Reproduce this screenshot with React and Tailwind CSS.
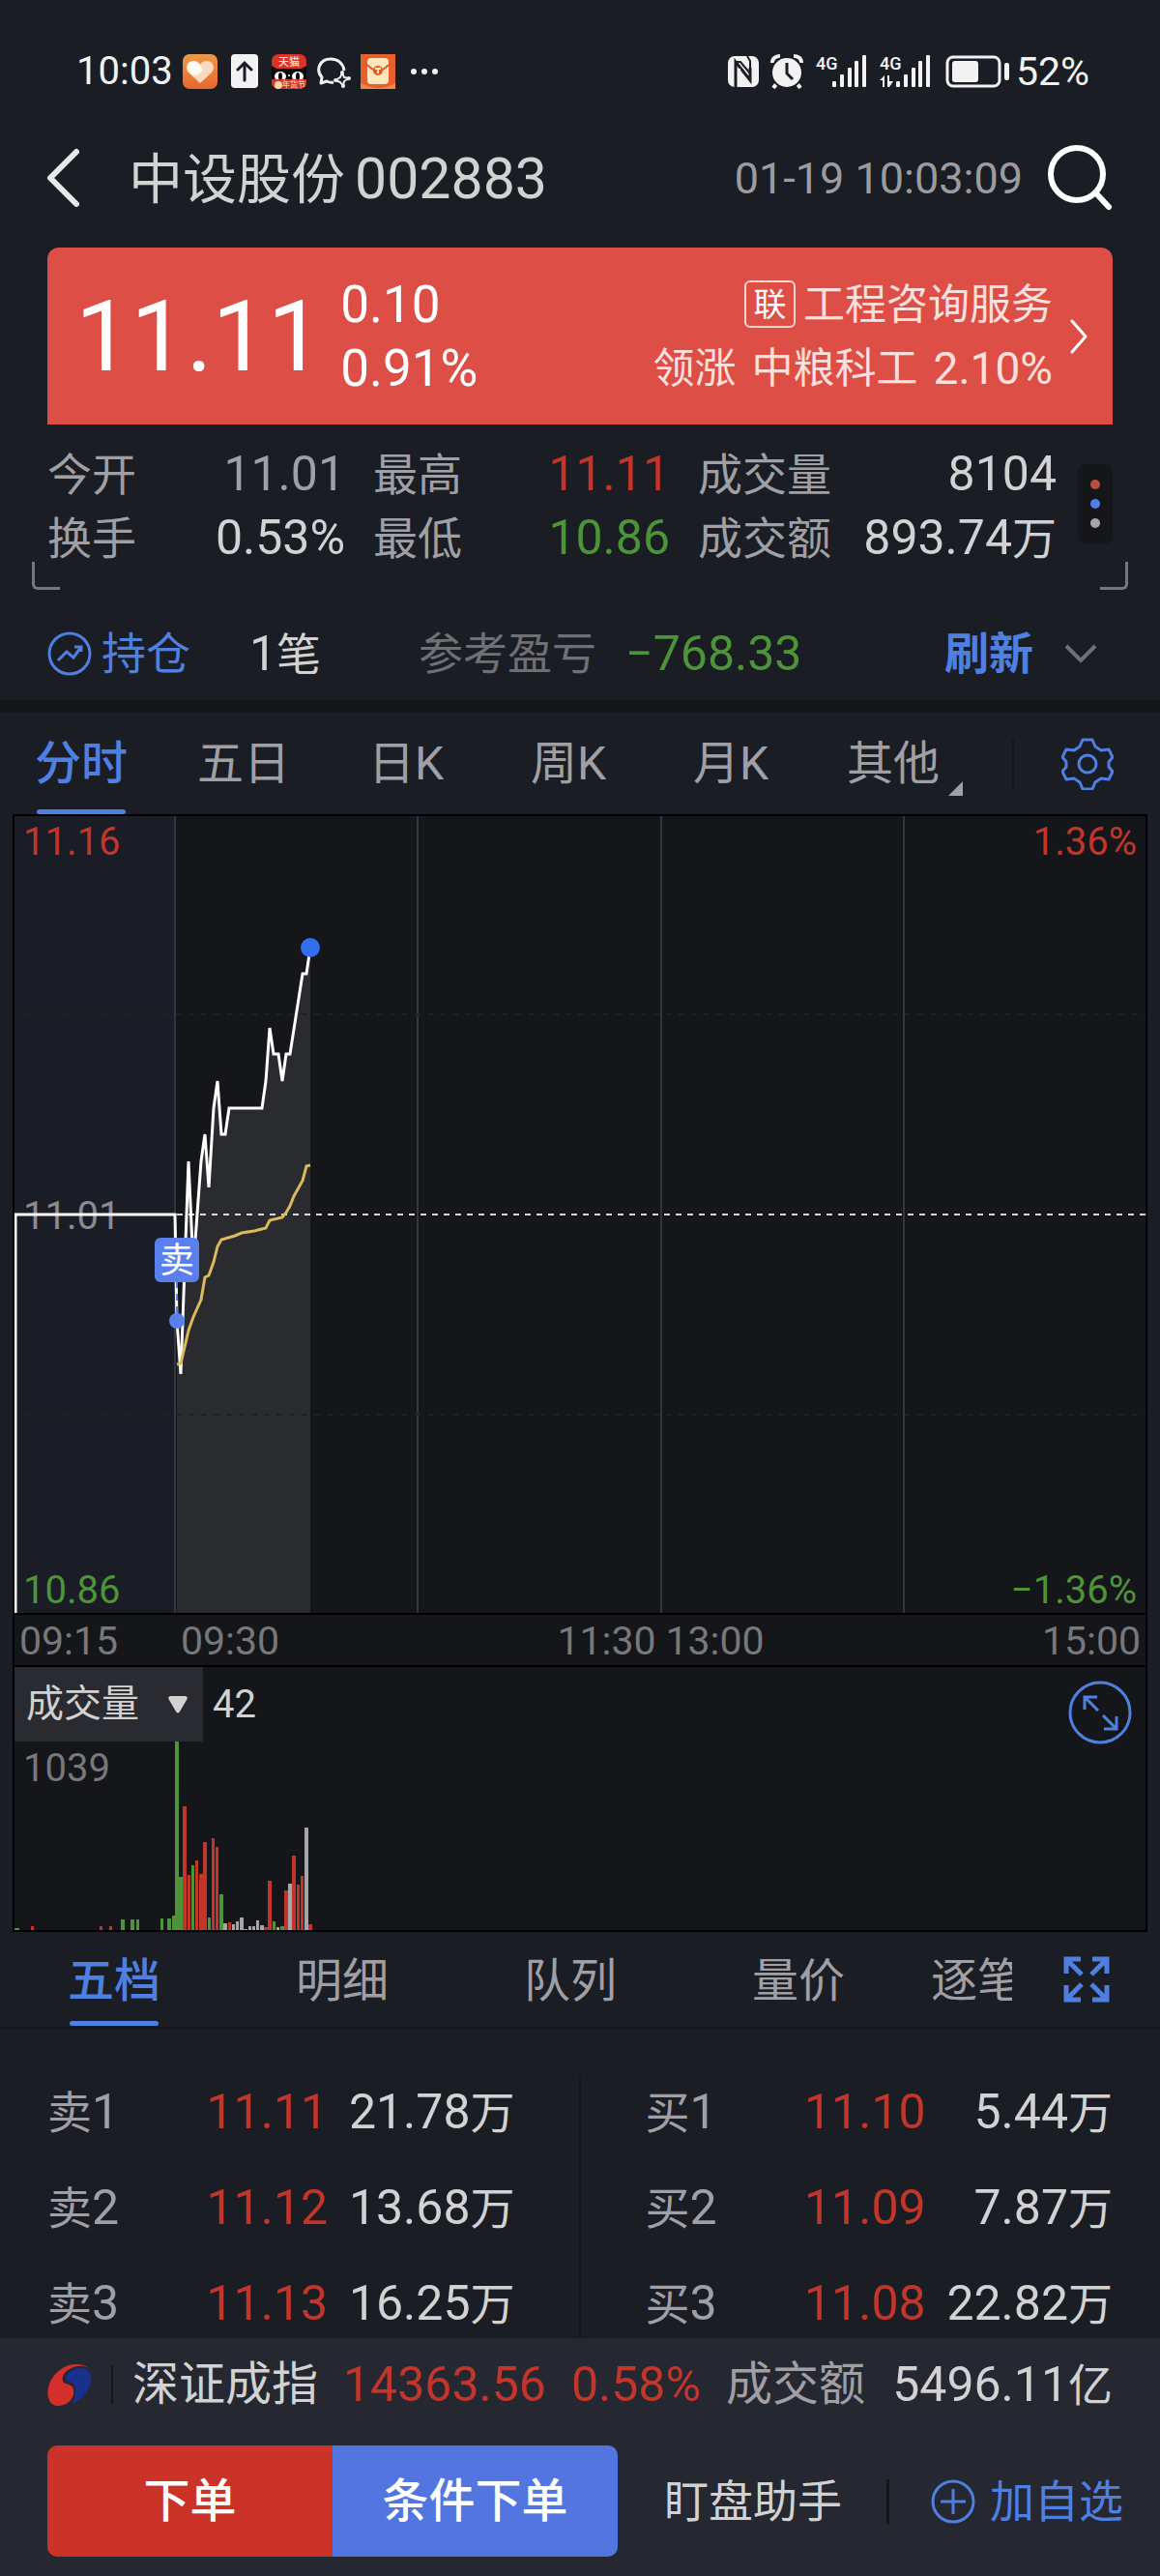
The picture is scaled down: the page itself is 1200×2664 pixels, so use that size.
const PRICE_POINTS =
  '3,826 3,413 168,413 170,523 174,578 182,358 187,467 195,358 199,330 203,385 208,303 212,275 216,330 220,330 224,303 258,303 262,275 266,220 270,247 275,247 279,275 283,247 287,247 300,164 304,164 308,137'

const AREA_POINTS =
  '170,826 170,523 174,578 182,358 187,467 195,358 199,330 203,385 208,303 212,275 216,330 220,330 224,303 258,303 262,275 266,220 270,247 275,247 279,275 283,247 287,247 300,164 304,164 308,137 308,826'

const AVERAGE_POINTS =
  '170,568 174,567 182,533 187,519 195,501 199,478 203,476 208,462 212,446 216,439 230,435 237,432 250,430 262,427 266,419 279,416 283,411 287,404 291,394 300,378 304,363 308,362'

const RED = '#c1352b'
const GREEN = '#4c9437'
const GREY = '#a6a6aa'

// x, height, colour, width
const VOLUME_BARS = [
  [2, 2, GREEN, 5], [19, 4, RED, 3], [90, 4, RED, 3], [100, 4, RED, 3],
  [112, 11, GREEN, 4], [122, 11, GREEN, 4], [128, 11, GREEN, 3], [153, 12, GREEN, 3],
  [160, 12, GREEN, 4], [165, 15, GREEN, 4], [168, 195, GREEN, 4], [172, 55, GREEN, 4],
  [176, 128, RED, 4], [181, 57, RED, 3], [185, 67, GREEN, 3], [189, 72, RED, 3],
  [193, 58, RED, 4], [197, 91, RED, 4], [202, 13, GREEN, 3], [206, 95, RED, 3],
  [210, 86, RED, 3], [214, 37, GREEN, 4], [218, 7, GREY, 4], [223, 8, RED, 3],
  [227, 6, GREY, 3], [231, 9, GREY, 3], [235, 13, GREY, 4], [239, 1, GREY, 4],
  [244, 4, GREY, 3], [248, 4, GREY, 3], [252, 10, GREY, 3], [256, 5, GREY, 4],
  [260, 3, RED, 4], [264, 51, RED, 4], [269, 9, GREEN, 3], [273, 3, GREY, 3],
  [277, 4, GREEN, 4], [281, 41, RED, 4], [285, 48, GREY, 4], [289, 77, RED, 4],
  [294, 47, RED, 3], [298, 56, RED, 3], [302, 106, GREY, 4], [306, 6, RED, 4],
]

const SELL_ROWS = [
  ['卖1', '11.11', '21.78万'],
  ['卖2', '11.12', '13.68万'],
  ['卖3', '11.13', '16.25万'],
]

const BUY_ROWS = [
  ['买1', '11.10', '5.44万'],
  ['买2', '11.09', '7.87万'],
  ['买3', '11.08', '22.82万'],
]

const STATS = [
  ['今开', '11.01', 'text-[#a0a0a4]'],
  ['最高', '11.11', 'text-[#c1352b]'],
  ['成交量', '8104', 'text-[#d2d2d2]'],
  ['换手', '0.53%', 'text-[#d2d2d2]'],
  ['最低', '10.86', 'text-[#4c9437]'],
  ['成交额', '893.74万', 'text-[#d2d2d2]'],
]

// Mixes 50px figures with slightly smaller Chinese units such as 万 and 亿.
function Figure({ value }) {
  const unit = value.match(/[万亿]$/)
  if (!unit) return <span className="text-[50px]">{value}</span>
  return (
    <>
      <span className="text-[50px]">{value.slice(0, -1)}</span>
      <span className="text-[46px]">{unit[0]}</span>
    </>
  )
}

function SignalIcon({ data }) {
  return (
    <svg className="h-[34px] w-[54px] overflow-visible" viewBox="0 0 54 34" fill="#f2f2f2" aria-hidden="true">
      <text x="0" y="15" fontSize="18" fontWeight="500" fontFamily="Roboto, sans-serif">4G</text>
      {data && <path d="M5 21v12H3v-7H0zM8 21h2v6h4l-4 6H8z" />}
      <rect x="17" y="27" width="4" height="6" rx="1" />
      <rect x="25" y="20" width="4" height="13" rx="1" />
      <rect x="33" y="13" width="4" height="20" rx="1" />
      <rect x="40" y="6" width="4" height="27" rx="1" />
      <rect x="48" y="0" width="4" height="33" rx="1" />
    </svg>
  )
}

function StatusBar() {
  return (
    <div className="flex h-[146px] items-center justify-between pt-[2px] pr-[73px] pl-[79px] text-[#f2f2f2]">
      <div className="flex items-center">
        <span className="text-[40px] leading-none">10:03</span>
        <svg className="ml-[10px] size-9" viewBox="0 0 36 36" aria-hidden="true">
          <defs>
            <linearGradient id="heartBg" x2="0" y2="1">
              <stop offset="0" stopColor="#eb9a4b" />
              <stop offset="1" stopColor="#e6672e" />
            </linearGradient>
          </defs>
          <rect width="36" height="36" rx="7" fill="url(#heartBg)" />
          <path d="M18 30L6 19C1 13 6 6 12 7c3 0 5 2 6 4 1-2 3-4 6-4 6-1 11 6 6 12z" fill="#fbd9bd" />
          <path d="M18 11c-4-5-10-5-13 0-1 5 2 8 6 12l5-2 5-4z" fill="#fffaf4" />
        </svg>
        <svg className="ml-[14px] h-9 w-7" viewBox="0 0 28 36" aria-hidden="true">
          <rect width="28" height="35" rx="4" fill="#f2f2f2" />
          <path d="M14 27V10M7 16l7-7 7 7" fill="none" stroke="#1a1d25" strokeWidth="3" strokeLinecap="round" />
        </svg>
        <svg className="ml-[14px] size-9" viewBox="0 0 36 36" aria-hidden="true">
          <rect width="36" height="36" rx="7" fill="#db3327" />
          <path d="M0 12l5 3h26l5-3v14H0z" fill="#090909" />
          <text x="18" y="12" fontSize="11" fill="#fff" textAnchor="middle" fontFamily="Noto Sans CJK SC, sans-serif">天猫</text>
          <ellipse cx="9" cy="23" rx="6" ry="5" fill="#fff" />
          <ellipse cx="27" cy="23" rx="6" ry="5" fill="#fff" />
          <ellipse cx="9" cy="23" rx="2" ry="4" fill="#090909" />
          <ellipse cx="27" cy="23" rx="2" ry="4" fill="#090909" />
          <circle cx="18" cy="22" r="1" fill="#fff" />
          <path d="M0 26h36v3a7 7 0 0 1-7 7H7a7 7 0 0 1-7-7z" fill="#db3327" />
          <circle cx="7" cy="32" r="4" fill="#f9d9a4" />
          <text x="23" y="34" fontSize="8" fill="#ffe9cf" textAnchor="middle" fontFamily="Noto Sans CJK SC, sans-serif">年货节</text>
        </svg>
        <svg className="ml-[10px] size-9" viewBox="0 0 36 36" fill="none" stroke="#f2f2f2" strokeWidth="3" aria-hidden="true">
          <path d="M18 29c-3 1-5 0-7-1l-6 2 1-6C-1 16 4 5 15 5c8 0 13 5 14 12" strokeLinejoin="round" />
          <path d="M27 19l2 5 5 1-5 3-1 5-3-4-5-2 5-3z" strokeWidth="2" strokeLinejoin="round" />
          <g fill="#f2f2f2" stroke="none">
            <circle cx="27" cy="19" r="2" />
            <circle cx="34" cy="25" r="2" />
            <circle cx="28" cy="33" r="2" />
            <circle cx="20" cy="27" r="2" />
          </g>
        </svg>
        <svg className="ml-[10px] size-9" viewBox="0 0 36 36" aria-hidden="true">
          <rect width="36" height="36" fill="#e6602e" />
          <path d="M0 30q18 10 36 0v6H0z" fill="#f08a3c" />
          <rect x="7" y="4" width="22" height="27" rx="4" fill="#ffe6bd" />
          <path d="M7 11q11 12 22 0" fill="none" stroke="#e6602e" strokeWidth="2" />
          <circle cx="18" cy="17" r="5" fill="#dd5a2b" />
          <path d="M15 15h6M18 15v5" stroke="#ffe6bd" strokeWidth="2" />
        </svg>
        <svg className="ml-4 h-2 w-7" viewBox="0 0 28 8" fill="#f2f2f2" aria-hidden="true">
          <circle cx="3" cy="4" r="3" />
          <circle cx="14" cy="4" r="3" />
          <circle cx="25" cy="4" r="3" />
        </svg>
      </div>
      <div className="flex items-center">
        <svg className="size-8" viewBox="0 0 32 32" aria-hidden="true">
          <rect width="32" height="32" rx="7" fill="#f2f2f2" />
          <path d="M8 32V6l15 19V12" fill="none" stroke="#1a1d25" strokeWidth="3" />
          <path d="M8 6l5 0 10 12M23 25V5l-3-5" fill="none" stroke="#1a1d25" strokeWidth="2" />
          <path d="M12 13v13" stroke="#f2f2f2" strokeWidth="2" />
        </svg>
        <svg className="ml-3 h-9 w-[34px]" viewBox="0 0 34 36" aria-hidden="true">
          <path d="M6 31l-3 4M28 31l3 4" stroke="#f2f2f2" strokeWidth="4" />
          <path d="M2 9c0-5 4-7 8-7M32 9c0-5-4-7-8-7" fill="none" stroke="#f2f2f2" strokeWidth="4" />
          <circle cx="17" cy="19" r="16" fill="#f2f2f2" stroke="#1a1d25" strokeWidth="2" />
          <path d="M17 9v11l6 6" fill="none" stroke="#1a1d25" strokeWidth="3" />
        </svg>
        <div className="ml-[13px] flex gap-3">
          <SignalIcon />
          <SignalIcon data />
        </div>
        <svg className="ml-[14px] h-[34px] w-[67px]" viewBox="0 0 67 34" aria-hidden="true">
          <rect x="2" y="2" width="54" height="30" rx="6" fill="none" stroke="#f2f2f2" strokeWidth="3" />
          <rect x="7" y="6" width="27" height="22" rx="3" fill="#f2f2f2" />
          <rect x="61" y="8" width="5" height="18" rx="2" fill="#f2f2f2" />
        </svg>
        <span className="ml-[6px] text-[41px] leading-none">52%</span>
      </div>
    </div>
  )
}

function Header() {
  return (
    <header className="flex h-[76px] items-center px-[47px]">
      <button aria-label="返回">
        <svg className="h-[62px] w-9" viewBox="0 0 36 62" fill="none" stroke="#e8e8e8" strokeWidth="6" strokeLinecap="round" strokeLinejoin="round">
          <path d="M32 4L5 31l27 27" />
        </svg>
      </button>
      <h1 className="ml-[50px] flex items-baseline gap-[10px] leading-none whitespace-nowrap text-[#d2d2d2]">
        <span className="text-[56px]">中设股份</span>
        <span className="text-[59px]">002883</span>
      </h1>
      <time className="ml-auto text-[45px] leading-none whitespace-nowrap text-[#9c9ca0]">01-19 10:03:09</time>
      <button className="ml-[25px]" aria-label="搜索">
        <svg className="h-[68px] w-[70px]" viewBox="0 0 70 68" fill="none" stroke="#fff" strokeWidth="6" strokeLinecap="round">
          <circle cx="31" cy="30" r="27" />
          <path d="M51 50l13 14" />
        </svg>
      </button>
    </header>
  )
}

function QuoteCard() {
  return (
    <section className="mx-[49px] mt-[34px] flex h-[183px] items-center rounded-t-xl bg-[#dc4e46] pr-[26px] pl-[29px] text-white">
      <span className="text-[102px] leading-none">11.11</span>
      <div className="ml-[18px] flex flex-col text-[53px] leading-[66px]">
        <span>0.10</span>
        <span>0.91%</span>
      </div>
      <a href="#sector" className="ml-auto flex items-center gap-[18px] text-[#fde0de]">
        <span className="flex flex-col items-end text-[43px] leading-[66px]">
          <span className="flex items-center gap-2">
            <span className="flex h-[49px] w-[53px] items-center justify-center rounded-md border-2 border-[#fbd5d2] text-[34px] leading-none text-white">
              联
            </span>
            工程咨询服务
          </span>
          <span className="flex gap-4">
            <span>领涨</span>
            <span>中粮科工</span>
            <span className="text-[46px]">2.10%</span>
          </span>
        </span>
        <svg className="h-9 w-[18px]" viewBox="0 0 18 36" fill="none" stroke="#fff" strokeWidth="3" strokeLinecap="round" strokeLinejoin="round">
          <path d="M2 2l14 16L2 34" />
        </svg>
      </a>
    </section>
  )
}

function Stats() {
  return (
    <section className="relative flex h-[171px] gap-[22px] px-[49px] pt-[18px]">
      <dl className="grid flex-1 grid-cols-[308fr_307fr_371fr] content-start gap-x-[29px]">
        {STATS.map(([label, value, color]) => (
          <div key={label} className="flex h-[66px] items-baseline justify-between leading-[66px] whitespace-nowrap">
            <dt className="text-[46px] text-[#a0a0a4]">{label}</dt>
            <dd className={color}>
              <Figure value={value} />
            </dd>
          </div>
        ))}
      </dl>
      <button aria-label="更多指标" className="mt-[23px] flex h-[82px] w-9 flex-col items-center justify-center gap-[10px] rounded-lg bg-[#15161a]">
        <span className="size-[10px] rounded-full bg-[#b84f3d]" />
        <span className="size-[10px] rounded-full bg-[#4f7fe8]" />
        <span className="size-[10px] rounded-full bg-[#a6a6aa]" />
      </button>
      <span className="absolute bottom-0 left-[33px] size-[29px] rounded-bl-md border-b-[3px] border-l-[3px] border-[#77787c]" />
      <span className="absolute right-[33px] bottom-0 size-[29px] rounded-br-md border-r-[3px] border-b-[3px] border-[#77787c]" />
    </section>
  )
}

function Position() {
  return (
    <section className="flex h-[114px] items-center pt-[18px] pr-[64px] pl-[49px] text-[46px] leading-none whitespace-nowrap">
      <a href="#position" className="flex items-center gap-[10px] text-[#4f80e1]">
        <svg className="size-[46px]" viewBox="0 0 46 46" fill="none" stroke="currentColor" strokeWidth="3">
          <circle cx="23" cy="23" r="21" />
          <path d="M11 30l9-9 7 6 8-11M28 16h7v5" />
        </svg>
        持仓
      </a>
      <span className="ml-[61px] text-[#d2d2d2]">
        <span className="text-[50px]">1</span>笔
      </span>
      <span className="ml-[101px] text-[#6f7074]">参考盈亏</span>
      <span className="ml-[30px] text-[50px] text-[#4c9437]">−768.33</span>
      <button className="ml-auto font-bold text-[#4f80e1]">刷新</button>
      <button className="ml-[31px]" aria-label="展开">
        <svg className="h-5 w-9" viewBox="0 0 36 20" fill="none" stroke="#6f7074" strokeWidth="4">
          <path d="M3 2l15 15L33 2" />
        </svg>
      </button>
    </section>
  )
}

function PeriodTabs() {
  return (
    <nav className="flex h-[105px] items-stretch pr-[48px] text-[48px] leading-[106px] text-[#a0a0a4]">
      <div className="grid flex-1 grid-cols-6 items-start">
        <button className="flex flex-col items-center font-medium text-[#4f80e1]">
          <span className="h-[100px]">分时</span>
          <span className="h-[5px] w-[92px] rounded-sm bg-[#4f80e1]" />
        </button>
        <button>五日</button>
        <button>日K</button>
        <button>周K</button>
        <button>月K</button>
        <button className="relative">
          其他
          <svg className="absolute right-3 bottom-5 size-[15px]" viewBox="0 0 15 15" fill="#a0a0a4">
            <path d="M15 0v15H0z" />
          </svg>
        </button>
      </div>
      <span className="ml-[39px] h-[49px] w-[2px] self-center bg-[#121317]" />
      <button className="ml-[49px]" aria-label="设置">
        <svg className="size-[54px]" viewBox="0 0 54 54" fill="none" stroke="#4f80e1" strokeWidth="3" strokeLinejoin="round">
          <path d="M22 2h10l3 7 6 4 8-1 4 8-4 5v5l4 5-4 8-8-1-6 4-3 7H22l-3-7-6-4-8 1-4-8 4-5v-5l-4-5 4-8 8 1 6-4z" />
          <circle cx="27" cy="27" r="9" />
        </svg>
      </button>
    </nav>
  )
}

function PriceChart() {
  return (
    <div className="relative border-2 border-black bg-[#15161a] text-[40px] leading-none">
      <svg className="block h-auto w-full" viewBox="2 1 1170 824">
        <rect x="2" y="0" width="166" height="826" fill="#1a1d25" />
        <polygon points={AREA_POINTS} fill="#2a2b2f" />
        <path d="M168 0v826M419 0v826M671 0v826M922 0v826" stroke="#34353f" strokeWidth="2" />
        <path d="M0 206H1174M0 620H1174" stroke="#1f2026" strokeWidth="2" strokeDasharray="6 7" />
        <path d="M170 413H1174" stroke="#d8d8dc" strokeWidth="2" strokeDasharray="6 6" />
        <text x="11" y="428" fontSize="40" fill="#8b8b8f" fontFamily="Roboto, sans-serif">11.01</text>
        <polyline points={PRICE_POINTS} fill="none" stroke="#fff" strokeWidth="3" />
        <polyline points={AVERAGE_POINTS} fill="none" stroke="#dcb95a" strokeWidth="3" />
        <circle cx="308" cy="137" r="10" fill="#356df0" />
        <path d="M170 482v36" stroke="#5a80ef" strokeWidth="2" strokeDasharray="7 6" />
        <circle cx="170" cy="523" r="8" fill="#5a80ef" />
        <rect x="147" y="437" width="46" height="46" rx="6" fill="#5a80ef" />
        <text x="170" y="473" fontSize="36" fill="#fff" textAnchor="middle" fontFamily="Noto Sans CJK SC, sans-serif">卖</text>
      </svg>
      <span className="absolute top-[7px] left-[9px] text-[#c1352b]">11.16</span>
      <span className="absolute top-[7px] right-[9px] text-[#c1352b]">1.36%</span>
      <span className="absolute bottom-[3px] left-[9px] text-[#4c9437]">10.86</span>
      <span className="absolute right-[9px] bottom-[3px] text-[#4c9437]">−1.36%</span>
    </div>
  )
}

function TimeAxis() {
  return (
    <div className="grid h-[52px] grid-cols-[167px_1fr_auto_1fr] items-center border-x-2 border-black bg-[#15161a] px-[5px] pt-[2px] text-[41px] leading-none text-[#77787c]">
      <span>09:15</span>
      <span>09:30</span>
      <span className="flex gap-[10px]">
        <span>11:30</span>
        <span>13:00</span>
      </span>
      <span className="text-right">15:00</span>
    </div>
  )
}

function VolumeChart() {
  return (
    <div className="relative border-2 border-black bg-[#15161a] leading-none">
      <svg className="block h-auto w-full" viewBox="0 0 1170 272">
        {VOLUME_BARS.map(([x, height, color, width]) => (
          <rect key={x} x={x - 2} y={272 - height} width={width} height={height} fill={color} />
        ))}
      </svg>
      <div className="absolute top-0 left-0 flex items-center gap-[10px]">
        <button className="flex h-[77px] w-[195px] items-center justify-between bg-[#2a2b31] pr-4 pl-3 text-[39px] text-[#d2d2d2]">
          成交量
          <svg className="h-[18px] w-5" viewBox="0 0 20 18" fill="#d2d2d2">
            <path d="M2 0h16q3 1 1 4l-7 12q-2 3-4 0L1 4Q-1 1 2 0z" />
          </svg>
        </button>
        <span className="text-[40px] text-[#d2d2d2]">42</span>
      </div>
      <span className="absolute top-[85px] left-[9px] text-[40px] text-[#77787c]">1039</span>
      <button aria-label="全屏" className="absolute top-[13px] right-[13px]">
        <svg className="size-[68px]" viewBox="0 0 68 68" fill="none" stroke="#4f80e1" strokeWidth="3">
          <circle cx="34" cy="34" r="31" />
          <path d="M32 32L18 18M18 31V18h13M37 37l14 14M51 38v13H38" />
        </svg>
      </button>
    </div>
  )
}

function DepthTabs() {
  return (
    <nav className="flex h-[100px] items-stretch border-b-2 border-[#15161a] pr-[51px] text-[48px] leading-[102px] text-[#a0a0a4]">
      <div className="grid flex-1 grid-cols-[1fr_1fr_1fr_1fr_103px] items-start overflow-hidden">
        <button className="flex flex-col items-center font-medium text-[#4f80e1]">
          <span className="h-[92px]">五档</span>
          <span className="h-[5px] w-[92px] rounded-sm bg-[#4f80e1]" />
        </button>
        <button>明细</button>
        <button>队列</button>
        <button>量价</button>
        <button className="overflow-hidden pl-[19px] text-left whitespace-nowrap">逐笔</button>
      </div>
      <button className="ml-[52px]" aria-label="放大">
        <svg className="size-[50px]" viewBox="0 0 50 50" fill="none" stroke="#4f80e1" strokeWidth="5">
          <path d="M4 19V4h15M4 4l16 16M31 4h15v15M46 4L30 20M4 31v15h15M4 46l16-16M46 31v15H31M46 46L30 30" />
        </svg>
      </button>
    </nav>
  )
}

function DepthTable({ rows, label }) {
  return (
    <table className="w-full table-fixed" aria-label={label}>
      <tbody>
        {rows.map(([name, price, volume]) => (
          <tr key={name} className="h-[99px] leading-none whitespace-nowrap">
            <th scope="row" className="w-[25%] text-left font-normal text-[#a0a0a4]">
              <span className="text-[46px]">{name[0]}</span>
              <span className="text-[50px]">{name[1]}</span>
            </th>
            <td className="w-[35%] text-right text-[50px] text-[#c1352b]">{price}</td>
            <td className="text-right text-[#d2d2d2]">
              <Figure value={volume} />
            </td>
          </tr>
        ))}
      </tbody>
    </table>
  )
}

function BottomBar() {
  return (
    <footer className="bg-[#252731] pb-5 whitespace-nowrap">
      <div className="flex h-[111px] items-center px-[49px] pb-[16px] leading-none">
        <svg className="size-[46px]" viewBox="0 0 46 46" aria-hidden="true">
          <path d="M44 7C34-2 16 1 6 15-3 27-1 45 11 45c10 0 18-8 16-17-1-5-6-5-10-7-4-5 1-12 8-15 7-3 13-3 19 1z" fill="#d4302b" />
          <path d="M26 43c14-7 21-21 19-29-2-9-12-10-19-6-6 3-9 8-6 12 5-1 9 2 9 8 0 5-1 10-3 15z" fill="#19318d" />
        </svg>
        <span className="ml-5 h-10 w-[2px] bg-[#15161a]" />
        <span className="ml-5 text-[48px] text-[#d2d2d2]">深证成指</span>
        <span className="ml-[26px] text-[50px] text-[#c1352b]">14363.56</span>
        <span className="ml-[26px] text-[50px] text-[#c1352b]">0.58%</span>
        <span className="ml-[26px] text-[48px] text-[#a0a0a4]">成交额</span>
        <span className="ml-auto text-[#d2d2d2]">
          <Figure value="5496.11亿" />
        </span>
      </div>
      <div className="flex h-[115px] items-stretch pr-[38px] pl-[49px] leading-none">
        <div className="grid w-[590px] shrink-0 grid-cols-2 overflow-hidden rounded-[10px] text-[48px] font-medium text-white">
          <button className="bg-[#cb3328]">下单</button>
          <button className="bg-[#5375e0]">条件下单</button>
        </div>
        <button className="ml-12 text-[46px] text-[#d2d2d2]">盯盘助手</button>
        <span className="ml-[46px] h-[46px] w-[3px] shrink-0 self-center bg-[#15161a]" />
        <button className="ml-auto flex items-center gap-[15px] text-[46px] text-[#4f80e1]">
          <svg className="size-[46px] shrink-0" viewBox="0 0 46 46" fill="none" stroke="currentColor" strokeWidth="3">
            <circle cx="23" cy="23" r="21" />
            <path d="M23 10v26M10 23h26" />
          </svg>
          加自选
        </button>
      </div>
    </footer>
  )
}

export default function App() {
  return (
    <main className="min-h-screen bg-[#1a1d24] font-[Roboto,'Noto_Sans_CJK_SC',sans-serif]">
      <StatusBar />
      <Header />
      <QuoteCard />
      <Stats />
      <Position />
      <div className="h-[13px] bg-[#15161a]" />
      <PeriodTabs />
      <section className="mx-[13px]">
        <PriceChart />
        <TimeAxis />
        <VolumeChart />
      </section>
      <DepthTabs />
      <section className="flex h-[320px] overflow-hidden pt-9">
        <div className="flex-1 pr-[66px] pl-[49px]">
          <DepthTable rows={SELL_ROWS} label="卖盘" />
        </div>
        <span className="mt-[14px] w-[2px] bg-[#15161a]" />
        <div className="flex-1 pr-[49px] pl-[67px]">
          <DepthTable rows={BUY_ROWS} label="买盘" />
        </div>
      </section>
      <BottomBar />
    </main>
  )
}
